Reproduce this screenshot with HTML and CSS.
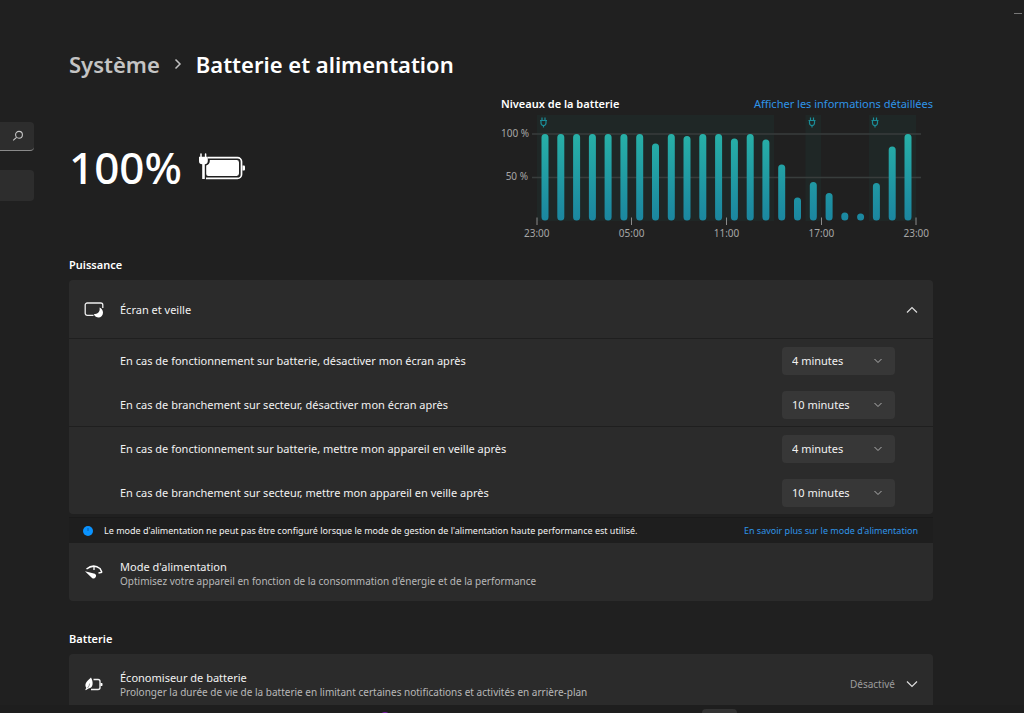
FILE: index.html
```
<!DOCTYPE html>
<html lang="fr">
<head>
<meta charset="utf-8">
<meta name="viewport" content="width=device-width, initial-scale=1">
<title>Batterie et alimentation</title>
<link rel="stylesheet" href="styles.css">
</head>
<body>
<div class="window">
  <aside class="sidebar">
    <form class="search" role="search">
      <input class="search-input" type="search" aria-label="Rechercher">
      <button class="search-button" type="button" aria-label="Lancer la recherche">
        <svg width="12" height="12" viewBox="0 0 12 12" fill="none" stroke="#c8c8c8" stroke-width="1.1"><circle cx="7" cy="4.8" r="3.4"/><path d="M4.5 7.3L1.2 10.4"/></svg>
      </button>
    </form>
    <a class="nav-item" href="#" aria-label="Système"></a>
  </aside>

  <main class="content">
    <nav class="breadcrumb" aria-label="Fil d'Ariane">
      <a class="crumb" href="#">Système</a>
      <svg width="8" height="12" viewBox="0 0 8 12" fill="none" stroke="#c0c0c0" stroke-width="1.5"><path d="M1.5 1.500L6 6L1.500 10.500"/></svg>
      <h1 class="title">Batterie et alimentation</h1>
    </nav>

    <section class="overview">
      <div class="level">
        <span class="percent">100%</span>
        <svg width="47" height="28" viewBox="0 0 47 28">
          <path d="M9 4.600H38.500a4 4 0 0 1 4 4V21.400a4 4 0 0 1-4 4H7" fill="none" stroke="#fff" stroke-width="1.700"/>
          <path d="M10.800 7H37.600a2.400 2.400 0 0 1 2.400 2.400V20.600a2.400 2.400 0 0 1-2.400 2.400H9.200a2 2 0 0 1-2-2V12.500Q10.800 11 10.800 8Z" fill="#fff"/>
          <path d="M43.500 12.500h1.500a1 1 0 0 1 1 1v3a1 1 0 0 1-1 1h-1.500Z" fill="#fff"/>
          <path d="M2 1v3M6.600 1v3" stroke="#fff" stroke-width="1.500" stroke-linecap="round"/>
          <path d="M0 3.800H8.800V8a3.200 3.200 0 0 1-3 3.200V26H3.200V11.200A3.200 3.200 0 0 1 0 8Z" fill="#fff"/>
        </svg>
      </div>

      <div class="chart">
        <div class="chart-head">
          <h2 class="heading">Niveaux de la batterie</h2>
          <a class="link" href="#">Afficher les informations détaillées</a>
        </div>
        <div class="plot">
          <div class="y-axis"><span>100 %</span><span>50 %</span></div>
          <svg class="bars" viewBox="0 0 389 110" role="img" aria-label="Niveau de la batterie sur 24 heures">
            <defs>
              <linearGradient id="teal" gradientUnits="userSpaceOnUse" x1="0" y1="19" x2="0" y2="106"><stop offset="0" stop-color="#27b0a7"/><stop offset="1" stop-color="#1b86a0"/></linearGradient>
              <g id="plug" fill="none" stroke="#1b8d98" stroke-width="1.200"><path d="M-1.500-4.500V-1.500M1.500-4.500V-1.500M-3.500-1.500H3.500M-2.500-1.500V1A2.500 2.500 0 0 0 2.500 1V-1.500M0 3.500V5.500"/></g>
            </defs>
            <path fill="#1f2726" d="M5 0H242V106H5ZM273.500 0H289V106H273.500ZM337 0H384V106H337Z"/>
            <path stroke="#383d3c" stroke-width="1.500" d="M0 19H389M0 62.500H389"/>
            <g stroke="#8b8b8b" stroke-width="1"><path d="M5 102.500V110M99.500 102.500V110M194.500 102.500V110M289.500 102.500V110M384 102.500V110"/></g>
            <use href="#plug" x="11.500" y="7"/><use href="#plug" x="280" y="7"/><use href="#plug" x="343" y="7"/>
            <g stroke="url(#teal)" stroke-width="7" stroke-linecap="round">
              <path d="M13 22.500V102M28.800 22.500V102M44.600 22.500V102M60.400 22.500V102M76.100 22.500V102M91.900 22.500V102M107.700 22.500V102M123.500 32V102M139.300 22.500V102M155 24.500V102M170.800 22.500V102M186.600 22.500V102M202.400 27V102M218.200 22.500V102M233.900 28V102M249.700 53V102M265.500 86V102M281.300 70.500V102M297.100 81.500V102M312.800 101V102M328.600 102V102.100M344.400 71.500V102M360.200 35V102M376 22.500V102"/>
            </g>
          </svg>
        </div>
        <div class="x-axis"><span>23:00</span><span>05:00</span><span>11:00</span><span>17:00</span><span>23:00</span></div>
      </div>
    </section>

    <section>
      <h2 class="heading section-title">Puissance</h2>
      <div class="card">
        <button class="card-head" type="button" aria-expanded="true">
          <svg width="20" height="18" viewBox="0 0 20 18"><path d="M9.500 14.300H3.200A2 2 0 0 1 1.200 12.300V4A2 2 0 0 1 3.200 2H16.800A2 2 0 0 1 18.800 4V7" fill="none" stroke="#eee" stroke-width="1.300"/><path d="M15.500 6.500C16.500 11 13.500 13 9.800 13.200C12 18 18.800 17.500 19 11.800C19 9 17.500 7.300 15.500 6.500Z" fill="#fff"/></svg>
          <span class="grow">Écran et veille</span>
          <svg width="12" height="8" viewBox="0 0 12 8" fill="none" stroke="#ddd" stroke-width="1.200"><path d="M1 6.500L6 1.500L11 6.500"/></svg>
        </button>
        <div class="group">
          <div class="row">
            <label for="screen-battery">En cas de fonctionnement sur batterie, désactiver mon écran après</label>
            <span class="select-box"><select id="screen-battery"><option>4 minutes</option><option>10 minutes</option></select><svg class="chevron" viewBox="0 0 8 6"><path d="M.5 1L4 4.500L7.500 1"/></svg></span>
          </div>
          <div class="row">
            <label for="screen-plugged">En cas de branchement sur secteur, désactiver mon écran après</label>
            <span class="select-box"><select id="screen-plugged"><option>4 minutes</option><option selected>10 minutes</option></select><svg class="chevron" viewBox="0 0 8 6"><path d="M.5 1L4 4.500L7.500 1"/></svg></span>
          </div>
        </div>
        <div class="group">
          <div class="row">
            <label for="sleep-battery">En cas de fonctionnement sur batterie, mettre mon appareil en veille après</label>
            <span class="select-box"><select id="sleep-battery"><option>4 minutes</option><option>10 minutes</option></select><svg class="chevron" viewBox="0 0 8 6"><path d="M.5 1L4 4.500L7.500 1"/></svg></span>
          </div>
          <div class="row">
            <label for="sleep-plugged">En cas de branchement sur secteur, mettre mon appareil en veille après</label>
            <span class="select-box"><select id="sleep-plugged"><option>4 minutes</option><option selected>10 minutes</option></select><svg class="chevron" viewBox="0 0 8 6"><path d="M.5 1L4 4.500L7.500 1"/></svg></span>
          </div>
        </div>
      </div>

      <div class="notice">
        <svg width="10" height="10" viewBox="0 0 10 10"><circle cx="5" cy="5" r="5" fill="#0a93ff"/><path d="M5 2V5" stroke="#0b5fa8"/></svg>
        <span class="grow">Le mode d'alimentation ne peut pas être configuré lorsque le mode de gestion de l'alimentation haute performance est utilisé.</span>
        <a class="link" href="#">En savoir plus sur le mode d'alimentation</a>
      </div>
      <div class="card mode-card">
        <div class="card-head">
          <svg width="20" height="18" viewBox="0 0 20 18"><path d="M2.500 5Q9.500 -.500 16 4.500L18 8.500" fill="none" stroke="#fff" stroke-width="1.500"/><path d="M10 2.500V6M18 8.300L14.500 9" stroke="#fff" stroke-width="1.300"/><path d="M1 7.200L10.800 9.700A2.500 2.500 0 1 1 8 14Z" fill="#fff"/></svg>
          <div class="grow">
            <div>Mode d'alimentation</div>
            <div class="sub">Optimisez votre appareil en fonction de la consommation d'énergie et de la performance</div>
          </div>
        </div>
      </div>
    </section>

    <section class="battery">
      <h2 class="heading section-title">Batterie</h2>
      <div class="card">
        <button class="card-head" type="button" aria-expanded="false">
          <svg width="20" height="18" viewBox="0 0 20 18"><path d="M9.500 4.500H14A2 2 0 0 1 16 6.500V12.500A2 2 0 0 1 14 14.500H7" fill="none" stroke="#eee" stroke-width="1.400"/><path d="M16.500 8h1.300a.7.7 0 0 1 .7.7v1.600a.7.7 0 0 1-.7.7h-1.300Z" fill="#fff"/><path d="M7 2.500C9.500 7 9.500 13 4.500 13.500L1.800 15.200L1.300 14.500L2.300 13C0 9 2.500 6.500 7 2.500Z" fill="#fff"/><path d="M5.700 8.500Q5.500 11 3.500 13" fill="none" stroke="#555" stroke-width=".6"/></svg>
          <span class="grow">
            <span class="line">Économiseur de batterie</span>
            <span class="line sub">Prolonger la durée de vie de la batterie en limitant certaines notifications et activités en arrière-plan</span>
          </span>
          <span class="status">
            <span class="state">Désactivé</span>
            <svg width="12" height="8" viewBox="0 0 12 8" fill="none" stroke="#ddd" stroke-width="1.200"><path d="M1 1.500L6 6.500L11 1.500"/></svg>
          </span>
        </button>
      </div>
    </section>
  </main>
  <button class="minimise" type="button" aria-label="Réduire"></button>
</div>
<footer class="taskbar"><span class="app-dot"></span><span class="app-tile"></span></footer>
</body>
</html>
```
FILE: styles.css
```
* { box-sizing: border-box; }

body {
  margin: 0;
  height: 100vh;
  display: flex;
  flex-direction: column;
  overflow: hidden;
  background: #202020;
  color: #f2f2f2;
  font: 11px/16px "Noto Sans", "Open Sans", sans-serif;
}

h1, h2 { margin: 0; }
a { text-decoration: none; }
button { font: inherit; color: inherit; border: 0; background: none; padding: 0; text-align: left; }
svg { flex: none; display: block; }

.window { position: relative; flex: 1; min-height: 0; display: flex; overflow: hidden; }

.sidebar { flex: none; width: 34px; padding-top: 122px; display: flex; flex-direction: column; gap: 19px; }
.search { display: flex; height: 29px; background: #2d2d2d; border-bottom: 1px solid #8a8a8a; border-radius: 0 4px 4px 0; }
.search-input { flex: 1; min-width: 0; width: 0; padding: 0; border: 0; background: none; color: inherit; }
.search-button { width: 22px; display: flex; align-items: center; }
.nav-item { height: 31px; background: #2d2d2d; border-radius: 0 4px 4px 0; }

.content { flex: 1; min-width: 0; padding: 47px 91px 0 35px; }
.breadcrumb { display: flex; align-items: center; gap: 14px; height: 34px; font-size: 22px; line-height: 32px; font-weight: 600; }
.crumb { color: #c4c4c4; }
.title { font: inherit; color: #fff; }

.overview { display: grid; grid-template-columns: 1fr 1fr; padding-top: 15px; height: 176px; }
.level { display: flex; align-items: center; gap: 17px; height: 142px; color: #fff; }
.percent { font-size: 44px; line-height: 56px; font-weight: 500; }
.heading { font-size: 11px; line-height: 16px; font-weight: 600; color: #fff; }
.link { color: #2f94e8; white-space: nowrap; }

.chart-head { display: flex; justify-content: space-between; }
.plot { display: flex; padding: 3px 12px 0 0; }
.y-axis { flex: none; width: 31px; padding: 11px 4px 0 0; display: flex; flex-direction: column; gap: 29px; font-size: 10px; line-height: 14px; text-align: right; color: #a6a6a6; white-space: nowrap; }
.bars { flex: 1; min-width: 0; }
.x-axis { display: flex; justify-content: space-between; padding: 1px 4px 0 23px; font-size: 10px; line-height: 14px; color: #a6a6a6; }

.section-title { padding-bottom: 7px; }
.card { background: #2b2b2b; border-radius: 4px; }
.card-head { display: flex; align-items: center; width: 100%; height: 58px; padding: 2px 15px 0; gap: 16px; }
.grow { flex: 1; min-width: 0; }
.line { display: block; }
.sub { font-size: 10px; line-height: 13px; color: #b8b8b8; }
.status { display: flex; align-items: center; gap: 11px; }
.state { color: #9c9c9c; font-size: 10px; }

.group { border-top: 1px solid #1f1f1f; padding-left: 51px; padding-right: 38px; }
.row { display: flex; align-items: center; justify-content: space-between; height: 44px; }
.row:last-child { height: 43px; }
.select-box { position: relative; width: 113px; }
select { appearance: none; display: block; width: 100%; height: 28px; padding: 0 24px 0 10px; border: 0; border-radius: 4px; background: #373737; color: #f2f2f2; font: inherit; }
.chevron { position: absolute; right: 13px; top: 11px; width: 8px; height: 6px; fill: none; stroke: #b0b0b0; pointer-events: none; }

.notice { display: flex; align-items: center; gap: 11px; height: 26px; margin-top: 3px; padding: 0 15px 0 14px; font-size: 9px; background: #1e1e1e; border-top: 1px solid #1a1a1a; }
.mode-card { border-radius: 0 0 4px 4px; }
.battery { padding-top: 30px; }

.minimise { position: absolute; top: 7px; right: 0; width: 12px; height: 12px; display: flex; align-items: center; }
.minimise::before { content: ""; width: 8px; height: 1px; margin-left: 2px; background: #777; }

.taskbar { flex: none; height: 8px; padding: 4px 28% 0 37%; display: flex; justify-content: space-between; background: #1e1e1e; overflow: hidden; }
.app-dot { width: 12px; height: 12px; margin-top: 3px; border-radius: 50%; background: #7a1fa8; }
.app-tile { width: 35px; height: 8px; border-radius: 4px; background: #333; }
```
